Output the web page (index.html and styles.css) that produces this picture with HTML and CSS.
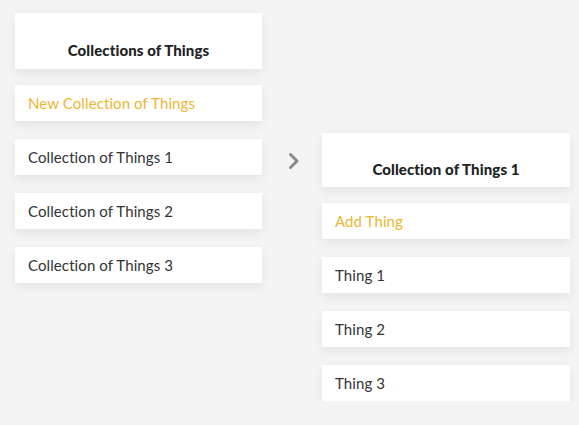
FILE: index.html
```html
<!DOCTYPE html>
<html lang="en">
<head>
    <meta charset="UTF-8">
    <meta name="viewport" content="width=device-width, initial-scale=1.0">
    <title>Collections of Things</title>
    <link rel="stylesheet" href="styles.css">
</head>
<body>
    <div class="board">
        <div class="column">
            <div class="card card-header">Collections of Things</div>
            <div class="card card-action">New Collection of Things</div>
            <div class="card">Collection of Things 1</div>
            <div class="card">Collection of Things 2</div>
            <div class="card">Collection of Things 3</div>
        </div>

        <div class="arrow">
            <svg width="12" height="18" viewBox="0 0 12 18">
                <path d="M2.5 2.5 L9 9 L2.5 15.5" fill="none" stroke="#8a8a8c" stroke-width="3" stroke-linecap="round" stroke-linejoin="round"/>
            </svg>
        </div>

        <div class="column column-detail">
            <div class="card card-header">Collection of Things 1</div>
            <div class="card card-action">Add Thing</div>
            <div class="card">Thing 1</div>
            <div class="card">Thing 2</div>
            <div class="card">Thing 3</div>
        </div>
    </div>
</body>
</html>
```

FILE: styles.css
```css
/* page */
body {
    margin: 0;
    background-color: #f4f4f5;
    font-family: Lato, "Open Sans", sans-serif;
    color: #333333;
}

.board {
    display: flex;
    align-items: flex-start;
    padding: 13px 0 0 15px;
}

/* columns of cards */
.column {
    width: 247px;
    display: flex;
    flex-direction: column;
    gap: 18px;
}

.column-detail {
    width: 248px;
    margin-top: 120px;
}

.column-detail .card-header {
    padding-top: 27px;
    padding-bottom: 9px;
}

.arrow {
    margin: 139px 22px 0 26px;
    height: 18px;
}

/* cards */
.card {
    background: #ffffff;
    height: 36px;
    line-height: 36px;
    padding: 0 13px;
    font-size: 15px;
    letter-spacing: 0.1px;
    box-shadow: 0 4px 10px rgba(0, 0, 0, 0.07);
}

.card-header {
    height: 18px;
    line-height: 18px;
    padding: 28px 13px 10px;
    margin-bottom: -2px;
    text-align: center;
    font-weight: 900;
    color: #222222;
}

.card-action {
    color: #ecb632;
}
```
